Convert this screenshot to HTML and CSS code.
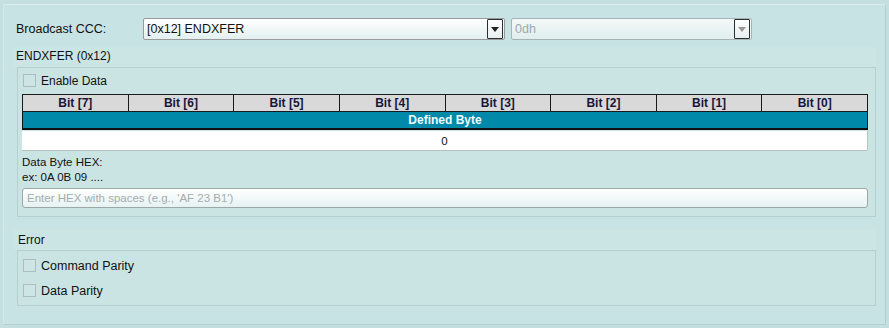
FILE: index.html
```html
<!DOCTYPE html>
<html>
<head>
<meta charset="utf-8">
<link rel="stylesheet" href="styles.css">
</head>
<body>
<div class="panel">
  <div class="row-top">
    <span class="lbl">Broadcast CCC:</span>
    <div class="combo main">
      <span class="combo-text">[0x12] ENDXFER</span>
      <span class="combo-btn"><span class="tri"></span></span>
    </div>
    <div class="combo disabled">
      <span class="combo-text">0dh</span>
      <span class="combo-btn"><span class="tri"></span></span>
    </div>
  </div>

  <div class="sec-title">ENDXFER (0x12)</div>
  <div class="group data-group">
    <label class="chk-row enable"><span class="chk"></span>Enable Data</label>
    <table class="bits">
      <tr class="hdr">
        <th>Bit [7]</th><th>Bit [6]</th><th>Bit [5]</th><th>Bit [4]</th>
        <th>Bit [3]</th><th>Bit [2]</th><th>Bit [1]</th><th>Bit [0]</th>
      </tr>
      <tr class="defined">
        <td colspan="8">Defined Byte</td>
      </tr>
    </table>
    <div class="value-box">0</div>
    <div class="hint first">Data Byte HEX:</div>
    <div class="hint">ex: 0A 0B 09 ....</div>
    <div class="hex-input">Enter HEX with spaces (e.g., 'AF 23 B1')</div>
  </div>

  <div class="sec-title err-title">Error</div>
  <div class="group err-group">
    <label class="chk-row"><span class="chk"></span>Command Parity</label>
    <label class="chk-row"><span class="chk"></span>Data Parity</label>
  </div>
</div>
</body>
</html>
```

FILE: styles.css
```css
html, body {
  margin: 0;
  padding: 0;
}
body {
  background: #c4dfdf;
  font-family: "Liberation Sans", Arial, sans-serif;
  font-size: 12px;
  color: #111;
  width: 889px;
  height: 328px;
  overflow: hidden;
}
.panel {
  margin: 4px 3px 0 3px;
  height: 321px;
  box-sizing: border-box;
  border: 1px solid #b4cfcf;
  border-top-color: #d7ebeb;
  border-left-color: #d3e9e9;
  background: #c8e3e3;
  display: flex;
  flex-direction: column;
}
.row-top {
  display: flex;
  align-items: center;
  height: 22px;
  margin-top: 13px;
  padding-left: 12px;
}
.lbl {
  width: 127px;
  font-size: 12.5px;
  color: #111;
}
.combo {
  height: 22px;
  box-sizing: border-box;
  border: 1px solid #9a9a9a;
  border-radius: 2px;
  background: linear-gradient(#ffffff, #e2f0ef);
  display: flex;
  align-items: center;
  justify-content: space-between;
}
.combo.main {
  width: 362px;
}
.combo.disabled {
  width: 241px;
  margin-left: 6px;
  border-color: #a8b4b4;
  background: linear-gradient(#f4f9f9, #e0eeee);
}
.combo-text {
  padding-left: 3px;
  font-size: 12.5px;
}
.disabled .combo-text {
  color: #a0a8a8;
}
.combo-btn {
  width: 14px;
  height: 18px;
  margin-right: 1px;
  border: 1px solid #2e2e2e;
  border-radius: 1px;
  background: linear-gradient(#ffffff, #e8eeee);
  display: flex;
  align-items: center;
  justify-content: center;
}
.tri {
  width: 0;
  height: 0;
  border-left: 4px solid transparent;
  border-right: 4px solid transparent;
  border-top: 5px solid #222;
}
.disabled .tri {
  border-top-color: #999;
}
.sec-title {
  height: 20px;
  line-height: 19px;
  margin-top: 7px;
  margin-left: 9px;
  margin-right: 9px;
  padding-left: 3px;
  background: #cbe5e5;
  font-size: 12px;
}
.group {
  margin-left: 13px;
  margin-right: 9px;
  border: 1px solid #b6d0d0;
  background: #cae4e4;
  box-sizing: border-box;
}
.data-group {
  height: 150px;
  padding: 5px 4px 0 4px;
}
.chk-row {
  display: flex;
  align-items: center;
  height: 13px;
  font-size: 12px;
}
.chk {
  width: 11px;
  height: 11px;
  border: 1px solid #aebcbc;
  background: #cde5e5;
  margin-left: 1px;
  margin-right: 5px;
}
.enable {
  margin-bottom: 7px;
  margin-top: 1px;
}
.bits {
  width: 846px;
  border-collapse: collapse;
  table-layout: fixed;
}
.bits th {
  height: 16px;
  padding: 0;
  background: #d9d9d9;
  border: 1px solid #1a1a1a;
  color: #16163a;
  font-weight: bold;
  font-size: 12px;
  line-height: 15px;
}
.bits td {
  height: 16px;
  padding: 0;
  background: #0089a8;
  border: 1px solid #111;
  border-bottom-width: 2px;
  color: #f2fbff;
  font-weight: bold;
  text-align: center;
  font-size: 12px;
  line-height: 16px;
}
.value-box {
  margin-top: 1px;
  width: 846px;
  height: 20px;
  box-sizing: border-box;
  background: #fff;
  border-right: 1px solid #b9c4c4;
  border-bottom: 1px solid #b4bfbf;
  border-radius: 0 0 2px 0;
  text-align: center;
  line-height: 20px;
  font-size: 11.5px;
}
.hint {
  font-size: 11.5px;
  line-height: 15px;
  color: #111;
}
.hint.first {
  margin-top: 4px;
}
.hex-input {
  margin-top: 3px;
  width: 846px;
  height: 20px;
  box-sizing: border-box;
  border: 1px solid #9da7a7;
  border-radius: 3px;
  background: linear-gradient(#ffffff, #e6f2f2);
  color: #a6adad;
  padding-left: 4px;
  line-height: 18px;
  font-size: 11.5px;
}
.err-title {
  margin-top: 12px;
  height: 21px;
  line-height: 21px;
  margin-left: 9px;
  padding-left: 5px;
  padding-top: 1px;
  box-sizing: border-box;
}
.err-group {
  height: 56px;
  padding: 8px 4px 0 4px;
  display: flex;
  flex-direction: column;
  gap: 12px;
}
.err-group .chk-row {
  font-size: 12.5px;
}
```
